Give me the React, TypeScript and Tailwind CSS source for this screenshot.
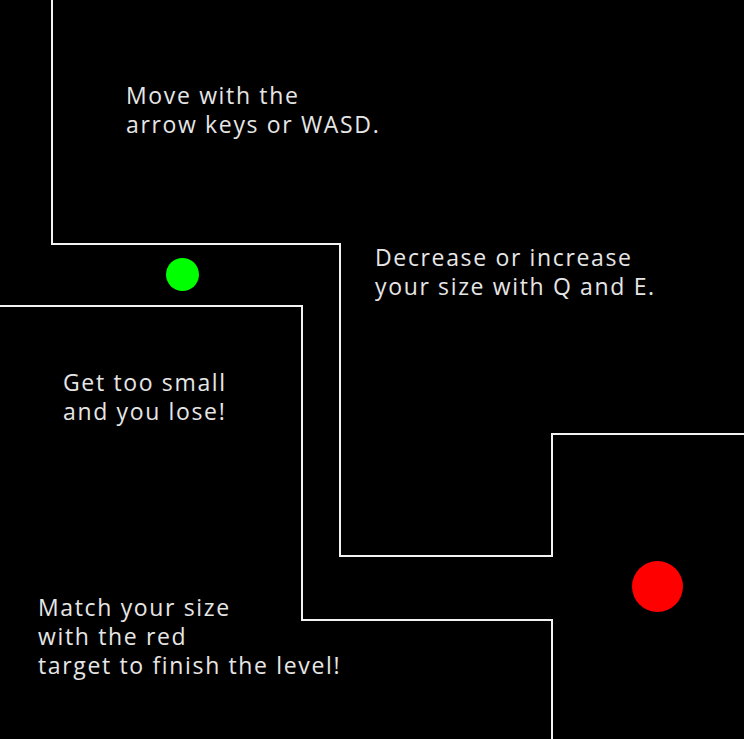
const hints = [
  { lines: ["Move with the", "arrow keys or WASD."], className: "left-[126px] top-[81px]" },
  { lines: ["Decrease or increase", "your size with Q and E."], className: "left-[375px] top-[243px]" },
  { lines: ["Get too small", "and you lose!"], className: "left-[63px] top-[368px]" },
  { lines: ["Match your size", "with the red", "target to finish the level!"], className: "left-[38px] top-[593px]" },
]

function Maze() {
  return (
    <svg className="absolute inset-0" width="744" height="739" viewBox="0 0 744 739">
      <g fill="none" stroke="#f2f2f2" strokeWidth="2">
        <polyline points="52,0 52,244 340,244 340,556 552,556 552,434 744,434" />
        <polyline points="0,306 302,306 302,620 552,620 552,739" />
      </g>
    </svg>
  )
}

export default function App() {
  return (
    <div className="relative w-[744px] h-[739px] bg-black overflow-hidden font-['Open_Sans',sans-serif]">
      <Maze />
      {hints.map((h) => (
        <p key={h.lines[0]} className={`absolute text-[23px] leading-[29px] tracking-[1.65px] text-[#e6e6e6] ${h.className}`}>
          {h.lines.map((l) => (
            <span key={l} className="block whitespace-nowrap">{l}</span>
          ))}
        </p>
      ))}
      {/* player */}
      <div className="absolute left-[166px] top-[258px] w-[33px] h-[33px] rounded-full bg-[#00ff00]" />
      {/* target */}
      <div className="absolute left-[632px] top-[561px] w-[51px] h-[51px] rounded-full bg-[#ff0000]" />
    </div>
  )
}
